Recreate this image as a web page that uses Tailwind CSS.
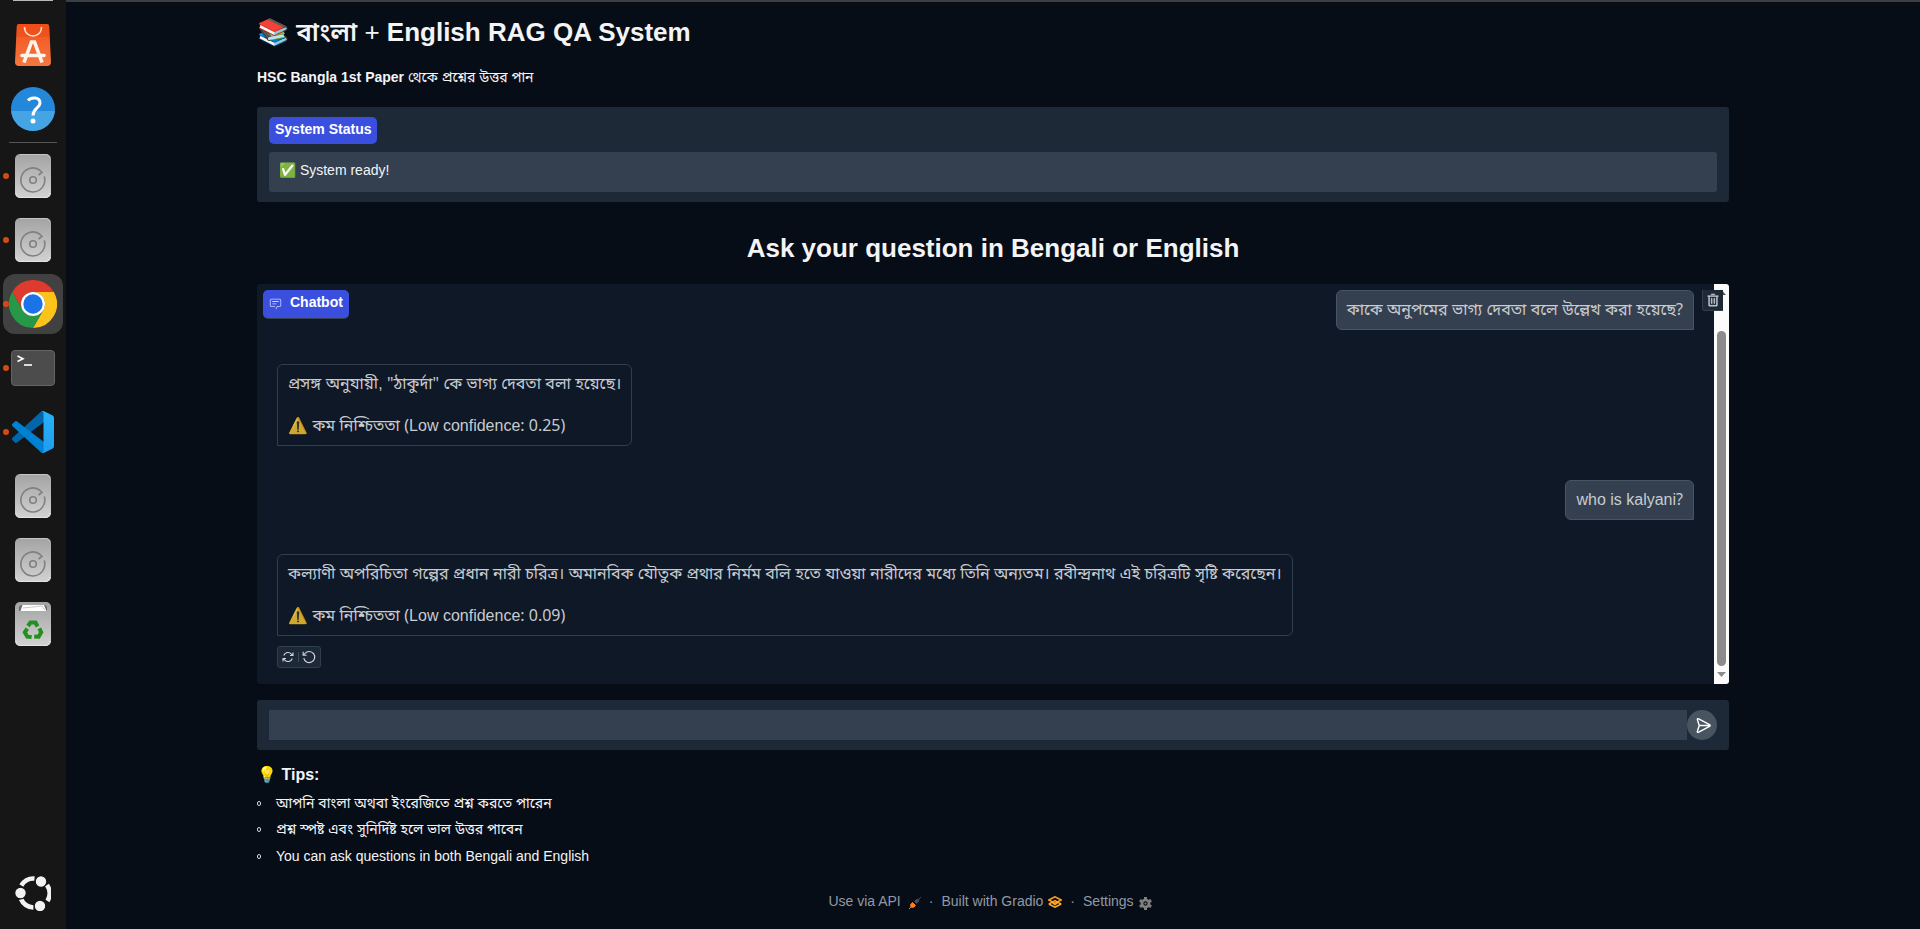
<!DOCTYPE html>
<html lang="bn">
<head>
<meta charset="utf-8">
<meta name="viewport" content="width=device-width, initial-scale=1">
<title>বাংলা + English RAG QA System</title>
<script src="https://cdn.jsdelivr.net/npm/@tailwindcss/browser@4"></script>
</head>
<body class="flex min-h-screen bg-[#070d16] font-['Liberation_Sans','Noto_Sans_Bengali',Arial,sans-serif] text-sm text-[#f3f4f6]">

<svg class="absolute size-0" aria-hidden="true">
  <defs>
    <linearGradient id="metal" x1="0" y1="0" x2="0" y2="1"><stop offset="0" stop-color="#a3a3a3"/><stop offset="1" stop-color="#d2d2d2"/></linearGradient>
    <linearGradient id="orange" x1="0" y1="0" x2="0" y2="1"><stop offset="0" stop-color="#f4511e"/><stop offset="1" stop-color="#f2783f"/></linearGradient>
    <linearGradient id="code" x1="0" y1="0" x2="0" y2="1"><stop offset="0" stop-color="#29b3f6"/><stop offset="1" stop-color="#1f9cf0"/></linearGradient>
    <symbol id="disk" viewBox="0 0 36 44">
      <rect width="36" height="44" rx="5" fill="url(#metal)"/>
      <path d="M5 .5H31A4.500 4.500 0 0 1 35 4" fill="none" stroke="#c4c4c4"/>
      <path d="M1 39a4.500 4.500 0 0 0 4 4.500H31a4.500 4.500 0 0 0 4-4.500" fill="none" stroke="#e4e4e4"/>
      <g fill="none" stroke="#808080" stroke-width="1.600">
        <path d="M29.300 22.500A12 12 0 1 1 24.500 16L27 18.500L23.500 21"/>
        <circle cx="18" cy="26" r="3.300"/>
      </g>
    </symbol>
  </defs>
</svg>

<aside class="flex w-[66px] shrink-0 flex-col justify-between bg-[#161616]" aria-label="Dock">
  <div>
    <div class="flex h-[13px] justify-center"><span class="h-px w-10 bg-[#b5bab7]"></span></div>
    <div class="flex h-16 items-center justify-center">
      <svg class="h-[42px] w-9" viewBox="0 0 36 42">
        <path d="M4 0H32Q34 0 34.200 2L36 38Q36 42 32 42H4Q0 42 0 38L1.800 2Q2 0 4 0Z" fill="url(#orange)"/>
        <path d="M1.600 13H34.400L34 2Q34 0 32 0H4Q2 0 1.900 2Z" fill="#ea4a12" opacity=".5"/>
        <path d="M9.500 3C9.500 15 26.500 15 26.500 3" fill="none" stroke="#fde3d6" stroke-width="1.500"/>
        <path d="M9 38.500L16.500 18H19.500L27 38.500" fill="none" stroke="#fff4ec" stroke-width="3.600"/>
        <path d="M7 31.500H29" stroke="#fff4ec" stroke-width="3.600" stroke-linecap="round"/>
      </svg>
    </div>
    <div class="flex h-16 items-center justify-center">
      <svg class="size-11" viewBox="0 0 44 44">
        <circle cx="22" cy="22" r="22" fill="#2388d9"/>
        <path d="M.1 24H43.900A22 22 0 0 1 .1 24Z" fill="#45a5e4"/>
        <path d="M17 13.500C20 10 29 9.500 29 16C29 21 22 21 22 28.500" fill="none" stroke="#fff" stroke-width="3"/>
        <circle cx="22" cy="34" r="2.500" fill="#fff"/>
      </svg>
    </div>
    <div class="flex h-[3px] items-center justify-center"><span class="h-px w-12 bg-[#555]"></span></div>
    <div class="relative flex h-16 items-center justify-center">
      <span class="absolute left-[3px] size-[6px] rounded-full bg-[#d9480f]"></span>
      <svg class="h-11 w-9"><use href="#disk"/></svg>
    </div>
    <div class="relative flex h-16 items-center justify-center">
      <span class="absolute left-[3px] size-[6px] rounded-full bg-[#d9480f]"></span>
      <svg class="h-11 w-9"><use href="#disk"/></svg>
    </div>
    <div class="relative flex h-16 items-center justify-center">
      <div class="flex size-[60px] items-center justify-center rounded-xl bg-[#414141]">
        <svg class="size-12" viewBox="0 0 48 48">
          <path d="M3.200 12A24 24 0 0 1 44.800 12H24A12 12 0 0 0 13.600 30Z" fill="#de3a2e"/>
          <path d="M44.800 12A24 24 0 0 1 24 48L34.400 30A12 12 0 0 0 24 12Z" fill="#fcc31a"/>
          <path d="M24 48A24 24 0 0 1 3.200 12L13.600 30A12 12 0 0 0 34.400 30Z" fill="#279847"/>
          <circle cx="24" cy="24" r="12" fill="#fff"/>
          <circle cx="24" cy="24" r="9.700" fill="#1a73e8"/>
        </svg>
      </div>
      <span class="absolute left-[3px] size-[6px] rounded-full bg-[#d9480f]"></span>
    </div>
    <div class="relative flex h-16 items-center justify-center">
      <span class="absolute left-[3px] size-[6px] rounded-full bg-[#d9480f]"></span>
      <svg class="h-9 w-11" viewBox="0 0 44 36">
        <rect x=".5" y=".5" width="43" height="35" rx="3.500" fill="#4c4c4c" stroke="#646464"/>
        <path d="M6.500 6L12 8.700L6.500 11.500" fill="none" stroke="#fff" stroke-width="1.600"/>
        <path d="M13 15H21" stroke="#fff" stroke-width="1.600"/>
      </svg>
    </div>
    <div class="relative flex h-16 items-center justify-center">
      <span class="absolute left-[3px] size-[6px] rounded-full bg-[#d9480f]"></span>
      <svg class="size-[42px]" viewBox="0 0 100 100">
        <path fill="#0065a9" d="M96.461 10.796L75.857.876A6.230 6.230 0 0 0 68.750 2.083L1.299 63.583a4.170 4.170 0 0 0 .004 6.162l5.510 5.009a4.160 4.160 0 0 0 5.321.236L93.361 13.370c2.725-2.067 6.639-.124 6.639 3.297v-.24a6.250 6.250 0 0 0-3.539-5.631Z"/>
        <path fill="#0080d0" d="M96.461 89.204l-20.604 9.920a6.230 6.230 0 0 1-7.107-1.207L1.299 36.417a4.170 4.170 0 0 1 .004-6.162l5.510-5.009a4.160 4.160 0 0 1 5.321-.236L93.361 86.630c2.725 2.067 6.639.124 6.639-3.297v.24a6.250 6.250 0 0 1-3.539 5.631Z"/>
        <path fill="url(#code)" d="M75.858 99.126a6.230 6.230 0 0 1-7.108-1.209c2.306 2.306 6.250.672 6.250-2.589V4.672c0-3.262-3.944-4.895-6.250-2.589A6.230 6.230 0 0 1 75.858.874l20.600 9.907A6.250 6.250 0 0 1 100 16.413v67.174a6.250 6.250 0 0 1-3.541 5.633L75.858 99.126Z"/>
      </svg>
    </div>
    <div class="flex h-16 items-center justify-center"><svg class="h-11 w-9"><use href="#disk"/></svg></div>
    <div class="flex h-16 items-center justify-center"><svg class="h-11 w-9"><use href="#disk"/></svg></div>
    <div class="flex h-16 items-center justify-center">
      <svg class="h-11 w-9" viewBox="0 0 36 44">
        <rect width="36" height="44" rx="5" fill="url(#metal)"/>
        <path d="M1 39a4.500 4.500 0 0 0 4 4.500H31a4.500 4.500 0 0 0 4-4.500" fill="none" stroke="#e4e4e4"/>
        <path d="M4 9V6Q4 3 7 3H29Q32 3 32 6V9Z" fill="#6b6b6b"/>
        <path d="M5.500 9L7.500 3H29L31.500 9Z" fill="#fff"/>
        <path d="M8 6L27 4L30 8" fill="none" stroke="#bbb" stroke-width=".8"/>
        <g fill="none" stroke="#22901e" stroke-width="4">
          <path id="leg" d="M13 24L15.500 20.500H20.500L22.500 24.500"/>
          <use href="#leg" transform="rotate(120 18 28.500)"/>
          <use href="#leg" transform="rotate(240 18 28.500)"/>
        </g>
      </svg>
    </div>
  </div>
  <div class="flex justify-center pr-px pb-[18px]">
    <svg class="size-9" viewBox="0 0 36 36">
      <g fill="none" stroke="#f2f2f2" stroke-width="4.600">
        <path d="M6.300 10.500A14.500 14.500 0 0 1 19.500 3.500"/>
        <path d="M32 10A15 15 0 0 1 32.500 26"/>
        <path d="M6 24A14.500 14.500 0 0 0 18.500 32.500"/>
      </g>
      <g fill="#f2f2f2" stroke="#161616" stroke-width="1.200">
        <circle cx="5.500" cy="18" r="5.800"/><circle cx="26" cy="6.500" r="5.800"/><circle cx="25" cy="31" r="5.800"/>
      </g>
    </svg>
  </div>
</aside>

<div class="flex min-w-0 flex-1 flex-col border-t-2 border-[#3c3e42]">
  <main class="mx-auto w-full max-w-[1536px] px-8">
    <h1 class="pt-3 text-[26px] leading-9 font-bold">📚 <span class="font-semibold">বাংলা</span> <span class="font-medium">+</span> English RAG QA System</h1>
    <p class="mt-[17px] leading-5"><strong>HSC Bangla 1st Paper</strong> থেকে প্রশ্নের উত্তর পান</p>

    <section class="mt-5 rounded-[3px] bg-[#1d2936] px-3 py-[10px]">
      <label for="status" class="inline-block h-[27px] rounded-[5px] bg-[#3b4fdf] px-[6px] pt-[2px] align-top leading-5 font-bold text-white">System Status</label>
      <input id="status" type="text" readonly value="✅ System ready!" class="mt-2 block h-10 w-full rounded-[3px] bg-[#344050] px-[10px] pb-1 text-sm text-[#f3f4f6] outline-none">
    </section>

    <h2 class="mt-[28px] text-center text-[26px] leading-9 font-bold">Ask your question in Bengali or English</h2>

    <section class="relative mt-[18px] flex h-[400px] overflow-hidden rounded-[3px] bg-[#0f1826]" aria-label="Chatbot">
      <div class="flex flex-1 flex-col px-5 pt-[6px] text-base leading-[22px] text-[#c8cbcf]">
        <div class="self-end rounded-md rounded-br-none border border-[#475563] bg-[#344050] px-[10px] py-2">কাকে অনুপমের ভাগ্য দেবতা বলে উল্লেখ করা হয়েছে<span class="font-['Noto_Sans'] leading-none">?</span></div>
        <div class="mt-[34px] flex flex-col gap-5 self-start rounded-md rounded-bl-none border border-[#2f3f4d] px-[10px] py-2">
          <p>প্রসঙ্গ অনুযায়ী, <span class="font-['Noto_Sans','Noto_Sans_Bengali'] leading-none">"ঠাকুর্দা"</span> কে ভাগ্য দেবতা বলা হয়েছে।</p>
          <p><span class="opacity-80">⚠️</span> কম নিশ্চিততা <span class="font-['Noto_Sans'] leading-none">(</span>Low confidence<span class="font-['Noto_Sans'] leading-none">: 0.25)</span></p>
        </div>
        <div class="mt-[34px] self-end rounded-md rounded-br-none border border-[#475563] bg-[#344050] px-[10px] py-2">who is kalyani<span class="font-['Noto_Sans'] leading-none">?</span></div>
        <div class="mt-[34px] flex flex-col gap-5 self-start rounded-md rounded-bl-none border border-[#2f3f4d] px-[10px] py-2">
          <p>কল্যাণী অপরিচিতা গল্পের প্রধান নারী চরিত্র। অমানবিক যৌতুক প্রথার নির্মম বলি হতে যাওয়া নারীদের মধ্যে তিনি অন্যতম। রবীন্দ্রনাথ এই চরিত্রটি সৃষ্টি করেছেন।</p>
          <p><span class="opacity-80">⚠️</span> কম নিশ্চিততা <span class="font-['Noto_Sans'] leading-none">(</span>Low confidence<span class="font-['Noto_Sans'] leading-none">: 0.09)</span></p>
        </div>
        <div class="mt-[10px] flex h-[22px] w-11 items-center justify-between self-start rounded-[3px] border border-[#2f3f4d] bg-[#1d2936] px-1 text-[#d1d5db]">
          <button type="button" aria-label="Retry"><svg class="size-3" viewBox="0 0 24 24" fill="none" stroke="currentColor" stroke-width="2.200"><path d="M22 3v6h-6M2 21v-6h6M3.500 9a9 9 0 0 1 14.900-3.400L22 9M2 15l3.600 3.400A9 9 0 0 0 20.500 15"/></svg></button>
          <span class="h-[10px] w-px bg-[#3c4a59]"></span>
          <button type="button" aria-label="Undo"><svg class="size-[14px]" viewBox="0 0 24 24" fill="none" stroke="currentColor" stroke-width="2"><path d="M2 3v6h6M3 14A9.500 9.500 0 1 0 5 6L2.500 9"/></svg></button>
        </div>
      </div>
      <div class="flex w-[15px] flex-col items-center bg-[#fcfcfc]" aria-hidden="true">
        <svg class="mt-[6px] h-[5px] w-[9px]" viewBox="0 0 9 5"><path d="M0 5L4.500 0L9 5Z" fill="#555"/></svg>
        <span class="mt-9 w-[9px] flex-1 rounded-full bg-[#8b8b8b]"></span>
        <svg class="mt-[6px] mb-[7px] h-[5px] w-[9px]" viewBox="0 0 9 5"><path d="M0 0H9L4.500 5Z" fill="#8b8b8b"/></svg>
      </div>
      <div class="absolute top-[6px] left-[6px] flex h-7 gap-2 rounded-[5px] bg-[#3b4fdf] px-[6px] pt-[2px] leading-5 font-bold text-white shadow-[0_1px_0_#374151]">
        <svg class="mt-[5px] size-[13px] text-[#cdd3fa]" viewBox="0 0 32 32" fill="currentColor"><path d="M17.740 30L16 29l4-7h6a2 2 0 0 0 2-2V8a2 2 0 0 0-2-2H6a2 2 0 0 0-2 2v12a2 2 0 0 0 2 2h9v2H6a4 4 0 0 1-4-4V8a4 4 0 0 1 4-4h20a4 4 0 0 1 4 4v12a4 4 0 0 1-4 4h-4.840Z"/><path d="M8 10h16v2H8zM8 16h10v2H8z"/></svg>
        Chatbot
      </div>
      <button type="button" aria-label="Clear" class="absolute top-[6px] right-[6px] flex size-[21px] items-center justify-center rounded-bl-[3px] border-b border-l border-[#2f3f4d] bg-[#1d2936] text-[#d1d5db]">
        <svg class="size-[14px]" viewBox="0 0 32 32" fill="currentColor" stroke="currentColor"><path d="M12 12h2v12h-2zM18 12h2v12h-2zM4 6v2h2v20a2 2 0 0 0 2 2h16a2 2 0 0 0 2-2V8h2V6zm4 22V8h16v20zM12 2h8v2h-8z"/></svg>
      </button>
    </section>

    <form class="mt-4 flex rounded-[3px] bg-[#1d2936] px-3 py-[10px]" onsubmit="return false">
      <input type="text" aria-label="Question" class="h-[30px] min-w-0 flex-1 bg-[#344050] px-2 text-sm text-white outline-none">
      <button type="submit" aria-label="Send" class="flex size-[30px] items-center justify-center rounded-full bg-[#485460] pl-[2px] text-white">
        <svg class="size-[17px]" viewBox="0 0 24 24" fill="none" stroke="currentColor" stroke-width="2" stroke-linejoin="round" stroke-linecap="round"><path d="M3.500 4.200Q2.600 1.600 5.200 2.600L20.500 10.800Q22.500 12 20.500 13.200L5.200 21.400Q2.600 22.400 3.500 19.800L6 12ZM6 12H20.500"/></svg>
      </button>
    </form>

    <h3 class="mt-[15px] text-base leading-5 font-bold">💡 Tips:</h3>
    <ul class="mt-1 leading-[26px]">
      <li class="flex items-center gap-[15px] pt-px"><span class="h-[5px] w-1 rounded-full border border-[#d1d5db]"></span>আপনি বাংলা অথবা ইংরেজিতে প্রশ্ন করতে পারেন</li>
      <li class="flex items-center gap-[15px]"><span class="h-[5px] w-1 rounded-full border border-[#d1d5db]"></span>প্রশ্ন স্পষ্ট এবং সুনির্দিষ্ট হলে ভাল উত্তর পাবেন</li>
      <li class="flex items-center gap-[15px] pt-px"><span class="h-[5px] w-1 rounded-full border border-[#d1d5db]"></span>You can ask questions in both Bengali and English</li>
    </ul>
  </main>

  <footer class="mt-[22px] flex items-center justify-center gap-2 pr-[6px] leading-5 text-[#9199a6]">
    <a href="#api" class="flex items-center gap-2">Use via API
      <svg class="mt-1 size-3" viewBox="0 0 12 12"><path d="M0 12L2 10Q.5 7.500 3.500 5.500L6.500 8.500Q4.500 11.500 2 10Z" fill="#ff7c1f" stroke="#ff7c1f"/><path d="M5.500 4.500Q7.500 1.500 9.800 2.200L12 0L9.800 2.200Q10.500 4.500 7.500 6.500Z" fill="#3f4a5a" stroke="#3f4a5a"/></svg>
    </a>
    <span>·</span>
    <a href="#gradio" class="flex items-center gap-[5px]">Built with Gradio
      <svg class="mt-[2px] h-3 w-[14px]" viewBox="0 0 14 12"><path d="M.8 4L7 .8L13.200 4L7 7.200Z" fill="none" stroke="#ff9a1f" stroke-width="1.600"/><path d="M.8 8L4 6.300M13.200 8L10 6.300M.8 8L7 11.200L13.200 8M4 6.300L7 4.700L10 6.300L7 8.500Z" fill="none" stroke="#ffa928" stroke-width="1.500"/></svg>
    </a>
    <span>·</span>
    <a href="#settings" class="flex items-center gap-[5px]">Settings
      <svg class="mt-1 size-[13px]" viewBox="0 0 24 24"><path d="M12 4V0M12 20V24M5 8L1.500 6M19 16L22.500 18M5 16L1.500 18M19 8L22.500 6" stroke="#808080" stroke-width="5.500"/><circle cx="12" cy="12" r="6.500" fill="none" stroke="#808080" stroke-width="5"/><circle cx="12" cy="12" r="2" fill="#808080"/></svg>
    </a>
  </footer>
</div>
</body>
</html>
